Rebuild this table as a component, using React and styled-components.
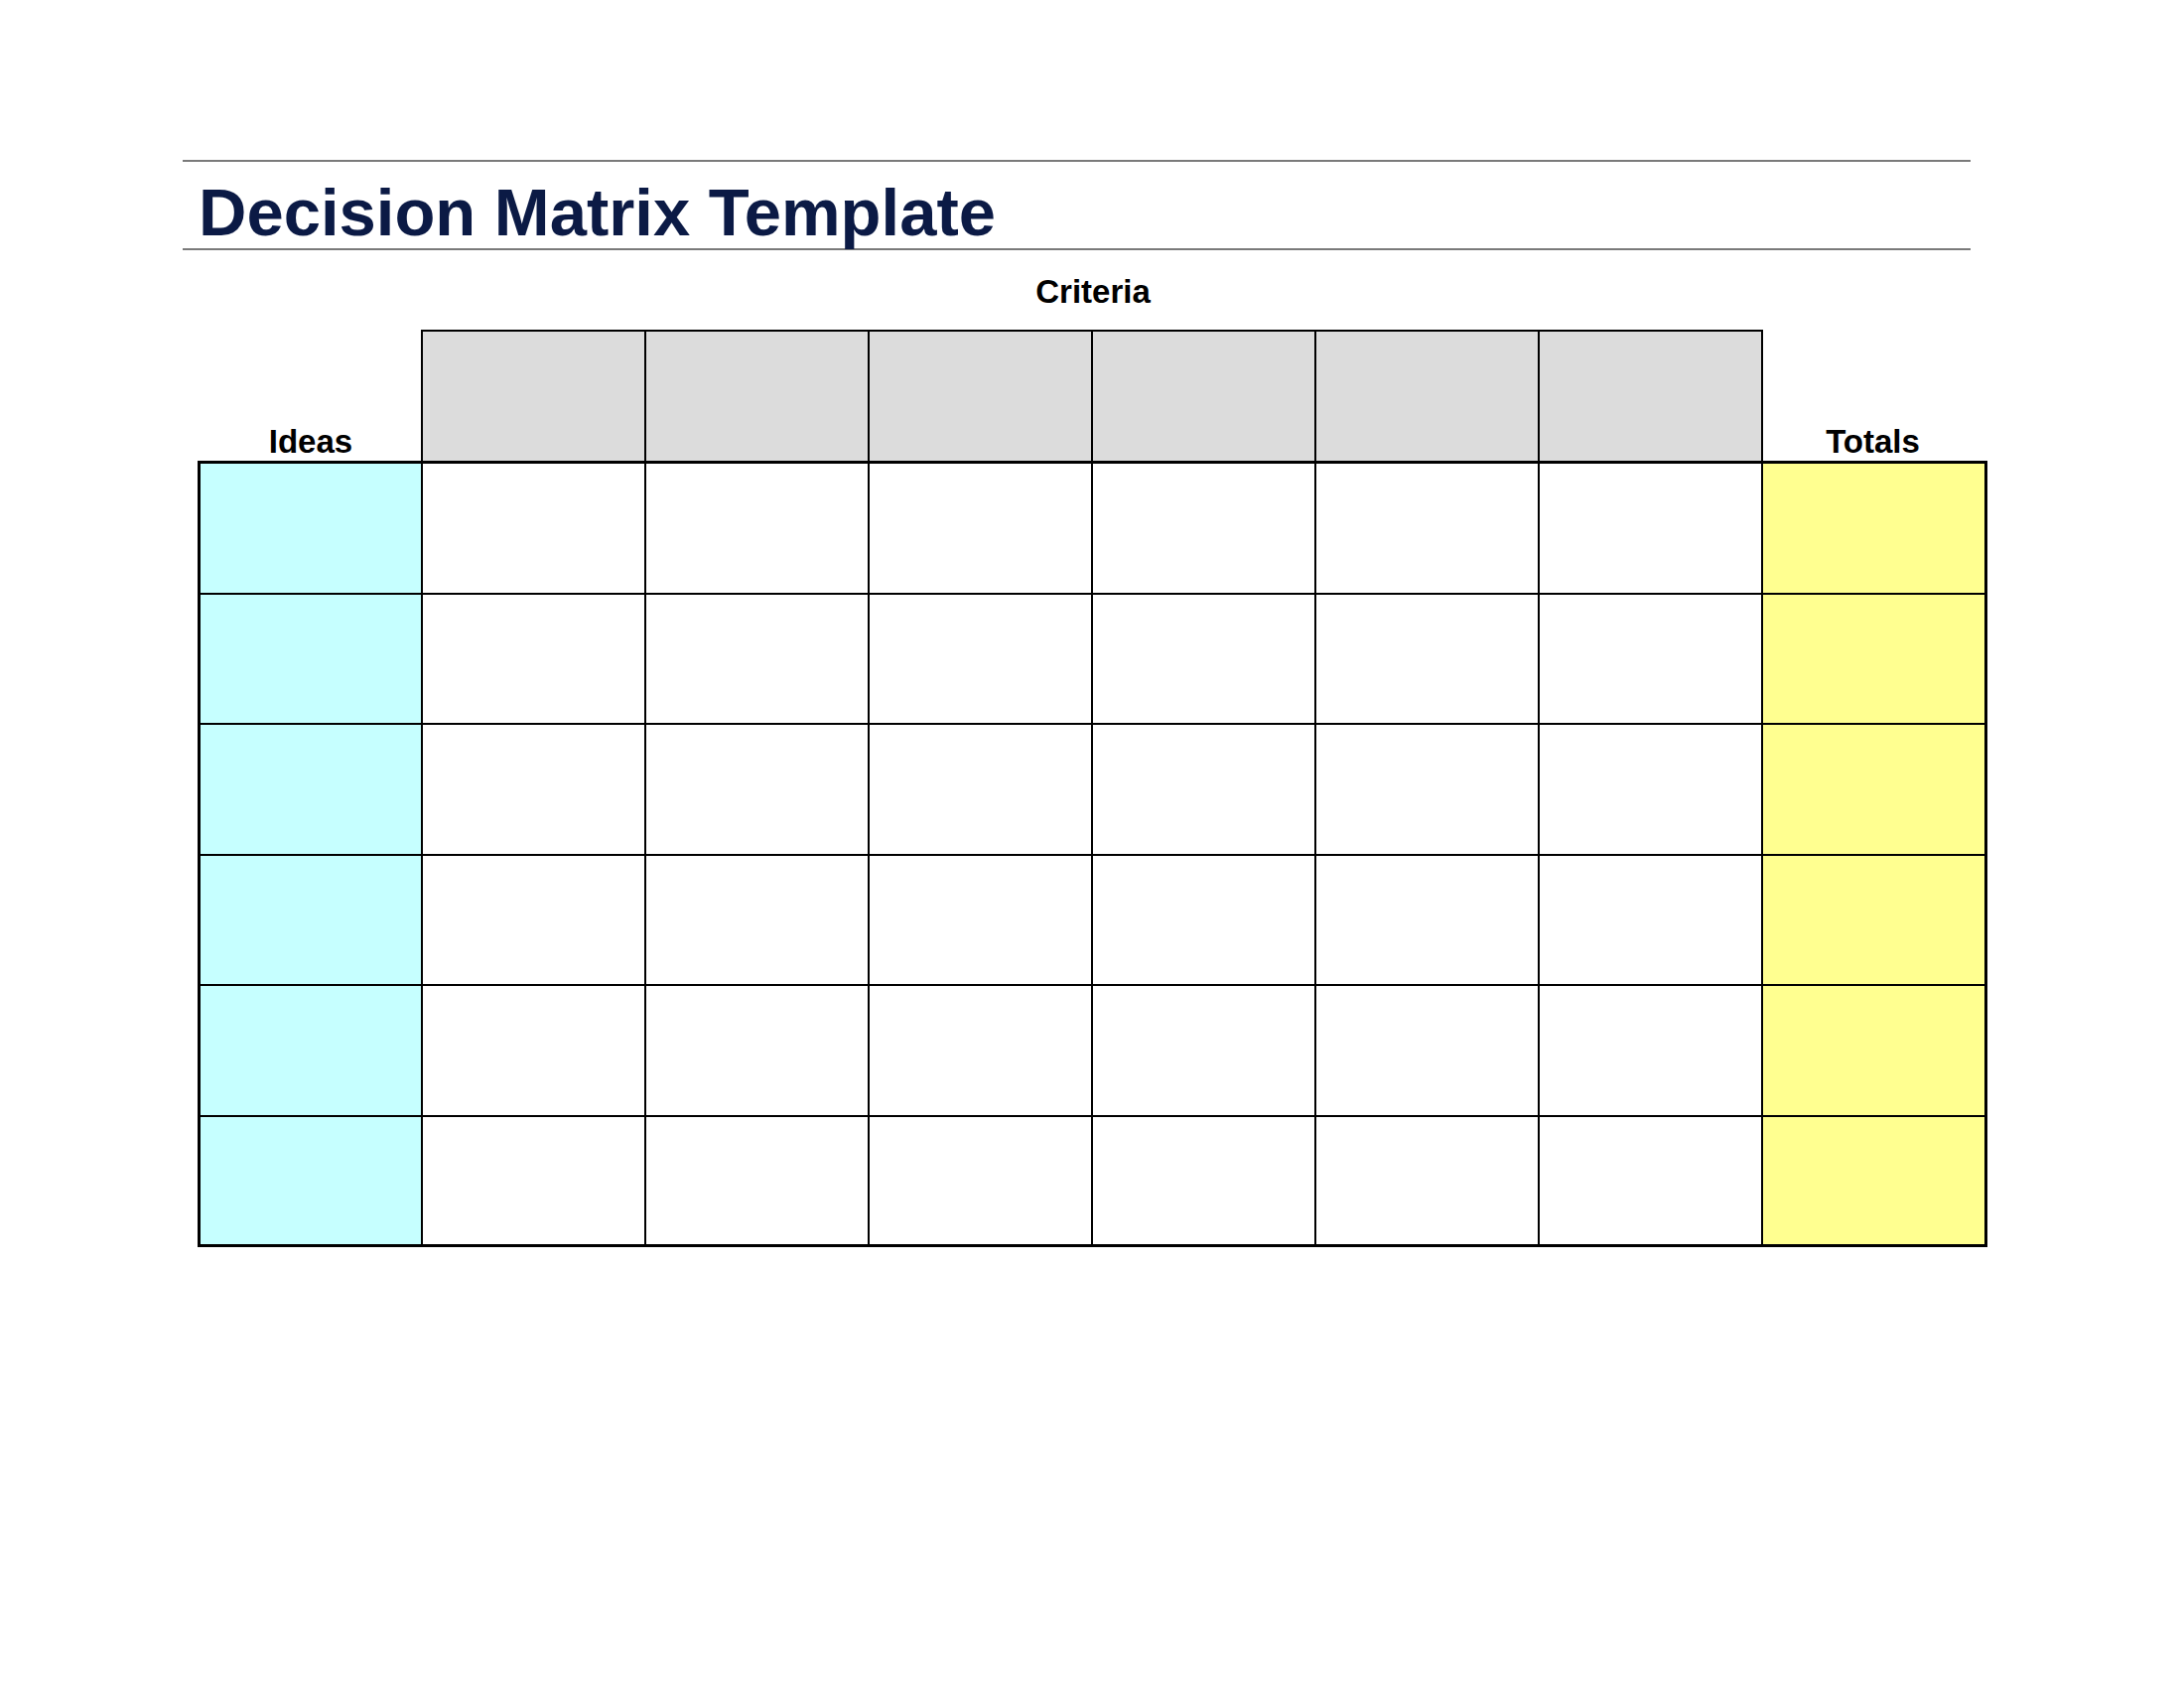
import React from "react";
import styled, { createGlobalStyle } from "styled-components";

const GlobalStyle = createGlobalStyle`
  html, body {
    margin: 0;
    padding: 0;
    background: #ffffff;
  }
  body {
    font-family: "Liberation Sans", Arial, sans-serif;
    color: #000000;
  }
`;

const CRITERIA = 6;
const IDEAS = 6;

function App() {
  const rows = Array.from({ length: IDEAS });
  const criteria = Array.from({ length: CRITERIA });

  return (
    <>
      <GlobalStyle />
      <Page>
        <TitleBlock>
          <Title>Decision Matrix Template</Title>
        </TitleBlock>
        <Matrix>
          <CriteriaLabel>Criteria</CriteriaLabel>
          <HeaderRow>
            <AxisLabel $divider>Ideas</AxisLabel>
            {criteria.map((_, i) => (
              <CriterionCell key={i} />
            ))}
            <AxisLabel>Totals</AxisLabel>
          </HeaderRow>
          <Body>
            {rows.map((_, r) => {
              const last = r === IDEAS - 1;
              return [
                <IdeaCell key={`i${r}`} $last={last} />,
                ...criteria.map((_, c) => (
                  <ScoreCell key={`s${r}-${c}`} $last={last} />
                )),
                <TotalCell key={`t${r}`} $last={last} />,
              ];
            })}
          </Body>
        </Matrix>
      </Page>
    </>
  );
}

const Page = styled.div`
  width: 2200px;
  min-height: 1700px;
  padding-top: 161px;
  box-sizing: border-box;
`;

const TitleBlock = styled.div`
  margin-left: 184px;
  width: 1801px;
  padding: 18px 0 3px 16px;
  border-top: 2px solid #7a7a7a;
  border-bottom: 2px solid #7a7a7a;
  box-sizing: border-box;
`;

const Title = styled.h1`
  margin: 0;
  font-family: "Liberation Sans", Arial, sans-serif;
  font-weight: 700;
  font-size: 67px;
  line-height: 66px;
  color: #0b1a45;
  letter-spacing: 0;
`;

const Matrix = styled.div`
  margin-left: 199px;
  width: 1803px;
`;

const CriteriaLabel = styled.div`
  margin: 26px 0 22px 227px;
  width: 1350px;
  text-align: center;
  font-weight: 700;
  font-size: 33px;
  line-height: 32px;
`;

const columns = "224px repeat(6, 225px) 223px";

const HeaderRow = styled.div`
  display: grid;
  grid-template-columns: ${columns};
  height: 132px;
  margin-left: 3px;
`;

const AxisLabel = styled.div`
  display: flex;
  align-items: flex-end;
  justify-content: center;
  padding-bottom: 3px;
  font-weight: 700;
  font-size: 33px;
  line-height: 32px;
  box-sizing: border-box;
  border-right: ${(p) => (p.$divider ? "2px solid #000" : "none")};
  padding-right: ${(p) => (p.$divider ? "0" : "2px")};
`;

const CriterionCell = styled.div`
  background: #dcdcdc;
  border-top: 2px solid #000;
  border-right: 2px solid #000;
  box-sizing: border-box;
`;

const Body = styled.div`
  display: grid;
  grid-template-columns: ${columns};
  grid-template-rows: repeat(5, 131.6px) 128.5px;
  border: 3px solid #000;
  width: fit-content;
`;

const Cell = styled.div`
  box-sizing: border-box;
  border-right: 2px solid #000;
  border-bottom: ${(p) => (p.$last ? "none" : "2px solid #000")};
  background: #ffffff;
`;

const IdeaCell = styled(Cell)`
  background: #c6ffff;
`;

const ScoreCell = styled(Cell)``;

const TotalCell = styled(Cell)`
  background: #ffff90;
  border-right: none;
`;

export default App;
